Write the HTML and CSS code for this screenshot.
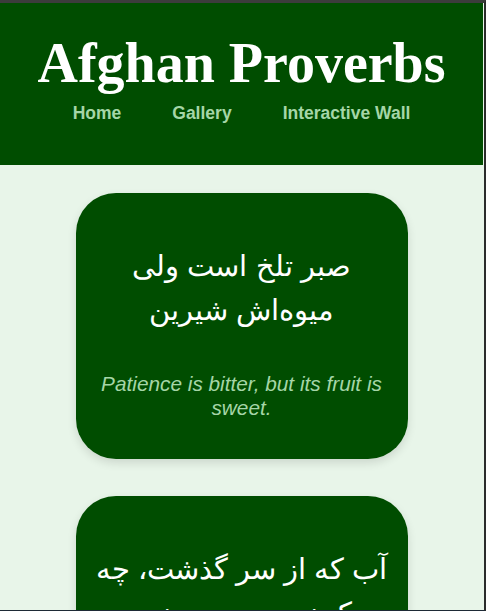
FILE: index.html
```html
<!DOCTYPE html>
<html lang="en">
<head>
<meta charset="utf-8">
<title>Afghan Proverbs</title>
<link rel="stylesheet" href="styles.css">
</head>
<body>
<div class="frame"></div>
<header class="site-header">
  <h1 class="title">Afghan Proverbs</h1>
  <nav class="nav">
    <a href="#">Home</a>
    <a href="#">Gallery</a>
    <a href="#">Interactive Wall</a>
  </nav>
</header>
<main class="proverbs">
  <article class="card">
    <p class="dari" lang="fa" dir="rtl">صبر تلخ است ولی میوه‌اش شیرین</p>
    <p class="english">Patience is bitter, but its fruit is sweet.</p>
  </article>
  <article class="card">
    <p class="dari" lang="fa" dir="rtl">آب که از سر گذشت، چه یک نیزه چه صد نیزه</p>
    <p class="english">Once the water is over your head, one spear or a hundred makes no difference.</p>
  </article>
</main>
</body>
</html>
```

FILE: styles.css
```css
html, body {
  margin: 0;
  padding: 0;
}
body {
  background: #e8f5e9;
  font-family: Arial, "Liberation Sans", sans-serif;
  padding: 3px 3px 0 0;
}
.frame {
  position: fixed;
  inset: 0;
  border-top: 3px solid #3c3c3c;
  border-right: 2px solid #2b2b2b;
  border-bottom: 1px solid #1e2a36;
  pointer-events: none;
  z-index: 10;
}
.site-header {
  background: #004d00;
  text-align: center;
  padding: 28px 0 41px;
}
.title {
  margin: 0;
  font-family: "Times New Roman", "Liberation Serif", serif;
  font-size: 56px;
  font-weight: bold;
  color: #ffffff;
  line-height: 1.15;
}
.nav {
  display: flex;
  justify-content: center;
  gap: 51px;
  margin-top: 8px;
}
.nav a {
  color: #a5d6a7;
  font-weight: bold;
  font-size: 17.5px;
  text-decoration: none;
}
.proverbs {
  display: flex;
  flex-direction: column;
  align-items: center;
  gap: 37px;
  padding-top: 28px;
}
.card {
  box-sizing: border-box;
  width: 332px;
  background: #004d00;
  border-radius: 40px;
  padding: 0 16px;
  text-align: center;
  box-shadow: 0 4px 10px rgba(0, 0, 0, 0.12);
  display: flex;
  flex-direction: column;
}
.dari {
  margin: 52px 0 40px;
  font-size: 29px;
  line-height: 1.5;
  color: #ffffff;
}
.english {
  margin: 0 0 39px;
  font-size: 20.8px;
  font-style: italic;
  color: #a5d6a7;
}
```
